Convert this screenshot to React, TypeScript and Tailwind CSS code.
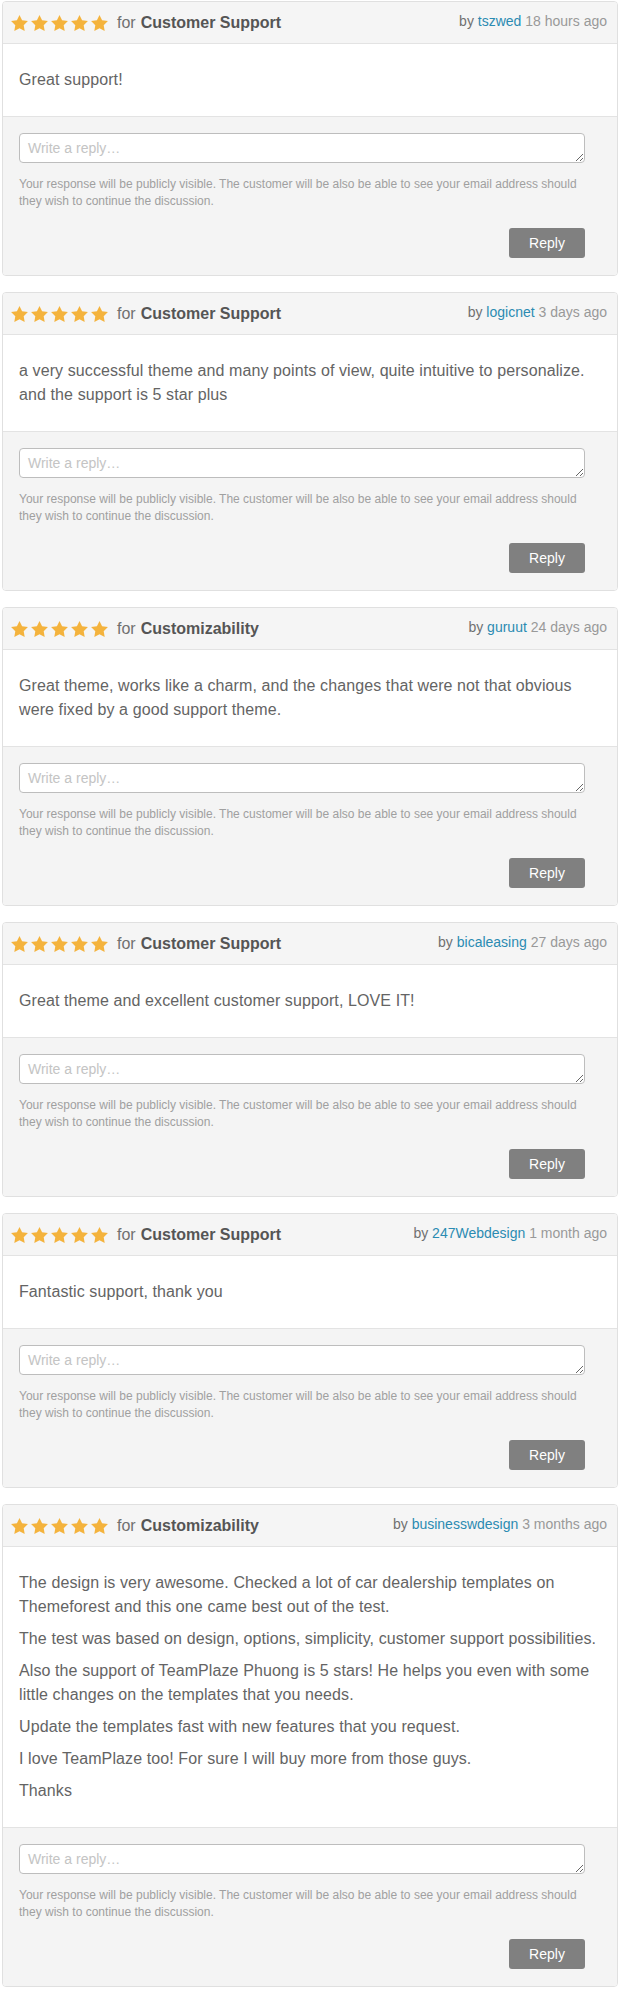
import React from "react";

type Review = {
  category: string;
  author: string;
  when: string;
  body: string[];
};

const reviews: Review[] = [
  { category: "Customer Support", author: "tszwed", when: "18 hours ago", body: ["Great support!"] },
  {
    category: "Customer Support",
    author: "logicnet",
    when: "3 days ago",
    body: ["a very successful theme and many points of view, quite intuitive to personalize. and the support is 5 star plus"],
  },
  {
    category: "Customizability",
    author: "guruut",
    when: "24 days ago",
    // line break kept as in the original review
    body: ["Great theme, works like a charm, and the changes that were not that obvious\nwere fixed by a good support theme."],
  },
  {
    category: "Customer Support",
    author: "bicaleasing",
    when: "27 days ago",
    body: ["Great theme and excellent customer support, LOVE IT!"],
  },
  { category: "Customer Support", author: "247Webdesign", when: "1 month ago", body: ["Fantastic support, thank you"] },
  {
    category: "Customizability",
    author: "businesswdesign",
    when: "3 months ago",
    body: [
      "The design is very awesome. Checked a lot of car dealership templates on Themeforest and this one came best out of the test.",
      "The test was based on design, options, simplicity, customer support possibilities.",
      "Also the support of TeamPlaze Phuong is 5 stars! He helps you even with some little changes on the templates that you needs.",
      "Update the templates fast with new features that you request.",
      "I love TeamPlaze too! For sure I will buy more from those guys.",
      "Thanks",
    ],
  },
];

function Star() {
  return (
    <svg viewBox="2 2 20 19.02" className="w-[17px] h-[16px]" fill="#f4b33d">
      <polygon points="12,2 15.09,8.26 22,9.27 17,14.14 18.18,21.02 12,17.77 5.82,21.02 7,14.14 2,9.27 8.91,8.26" />
    </svg>
  );
}

function ReviewCard({ review }: { review: Review }) {
  return (
    <div className="mb-[16px] border border-[#e0e0e0] rounded-[4px] overflow-hidden">
      {/* Header */}
      <div className="h-[42px] bg-[#f5f5f5] border-b border-[#e3e3e3] flex justify-between pl-[8px] pr-[10px]">
        <div className="flex items-center h-[41px] text-[16px] leading-[22px]">
          <div className="flex gap-[3px] mr-[9px]">
            <Star />
            <Star />
            <Star />
            <Star />
            <Star />
          </div>
          <span className="text-[#707070]">for</span>
          <span className="ml-[5px] font-bold text-[#555]">{review.category}</span>
        </div>
        <div className="pt-[9px] text-[14px] leading-[20px] text-[#707070]">
          by <span className="text-[#2b8bb2]">{review.author}</span>{" "}
          <span className="text-[#999]">{review.when}</span>
        </div>
      </div>

      {/* Body */}
      <div className="bg-white border-b border-[#e3e3e3] pt-[24px] pb-[24px] pl-[16px] pr-[8px] flex flex-col gap-[8px] text-[16px] leading-[24px] tracking-[0.1px] text-[#646464]">
        {review.body.map((p, i) => (
          <p key={i} className="whitespace-pre-line">
            {p}
          </p>
        ))}
      </div>

      {/* Reply area */}
      <div className="bg-[#f4f4f4] pt-[16px] pb-[17px] pl-[16px] pr-[32px] flex flex-col">
        <textarea
          rows={1}
          placeholder="Write a reply…"
          className="w-full h-[30px] bg-white border border-[#bdbdbd] rounded-[4px] px-[8px] py-[4px] text-[14px] leading-[20px] text-[#555] placeholder:text-[#c4c4c4] outline-none"
        />
        <p className="mt-[13px] text-[12px] leading-[17px] text-[#a0a0a0]">
          Your response will be publicly visible. The customer will be also be able to see your email address should they wish to continue the discussion.
        </p>
        <div className="mt-[18px] flex justify-end">
          <button className="w-[76px] h-[30px] bg-[#808080] rounded-[3px] text-white text-[14px]">Reply</button>
        </div>
      </div>
    </div>
  );
}

export default function App() {
  return (
    <div className="w-[620px] bg-white pt-[1px] px-[2px] font-['Liberation_Sans',Arial,sans-serif]">
      {reviews.map((r, i) => (
        <ReviewCard key={i} review={r} />
      ))}
    </div>
  );
}
